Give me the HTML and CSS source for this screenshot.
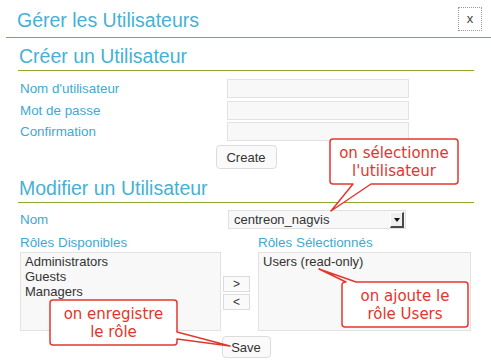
FILE: index.html
```html
<!DOCTYPE html>
<html lang="fr">
<head>
<meta charset="utf-8">
<title>Gérer les Utilisateurs</title>
<link rel="stylesheet" href="styles.css">
</head>
<body>
<div class="dialog">
  <div class="dlg-header">
    <h1 class="dlg-title">Gérer les Utilisateurs</h1>
    <button class="close-btn" type="button">x</button>
  </div>

  <section class="panel panel-create">
    <h2 class="panel-title">Créer un Utilisateur</h2>
    <div class="form-grid">
      <label class="field-label">Nom d'utilisateur</label>
      <input class="text-input" type="text">
      <label class="field-label">Mot de passe</label>
      <input class="text-input" type="password">
      <label class="field-label">Confirmation</label>
      <input class="text-input" type="password">
    </div>
    <div class="btn-row"><button class="btn btn-create" type="button">Create</button></div>
  </section>

  <section class="panel panel-modify">
    <h2 class="panel-title">Modifier un Utilisateur</h2>
    <div class="name-row">
      <label class="field-label">Nom</label>
      <div class="select">
        <span class="select-value">centreon_nagvis</span>
        <span class="select-arrow"><span class="select-tri"></span></span>
      </div>
    </div>
    <div class="roles">
      <div class="field-label roles-label">Rôles Disponibles</div>
      <div></div>
      <div class="field-label roles-label">Rôles Sélectionnés</div>
      <div class="listbox">
        <div>Administrators</div>
        <div>Guests</div>
        <div>Managers</div>
      </div>
      <div class="move-btns">
        <button class="move-btn" type="button">&gt;</button>
        <button class="move-btn" type="button">&lt;</button>
      </div>
      <div class="listbox">
        <div>Users (read-only)</div>
      </div>
    </div>
    <div class="btn-row"><button class="btn btn-save" type="button">Save</button></div>
  </section>

  <svg class="callout-shapes" width="491" height="361" viewBox="0 0 491 361">
    <path d="M333,139 H455 Q458,139 458,142 V181 Q458,184 455,184 H371 L331,211 L353,184 H333 Q330,184 330,181 V142 Q330,139 333,139 Z"/>
    <path d="M346,282 L319,269 L356,282 H465 Q468,282 468,285 V324 Q468,327 465,327 H345 Q342,327 342,324 V285 Q342,282 346,282 Z"/>
    <path d="M53,300 H174 Q177,300 177,303 V332 L230,346 L177,339 V342 Q177,345 174,345 H53 Q50,345 50,342 V303 Q50,300 53,300 Z"/>
  </svg>
  <div class="callout callout-select">on sélectionne<br>l'utilisateur</div>
  <div class="callout callout-add">on ajoute le<br>rôle Users</div>
  <div class="callout callout-save">on enregistre<br>le rôle</div>
</div>
</body>
</html>
```
FILE: styles.css
```css
* { box-sizing: border-box; }

body {
  margin: 0;
  background: #fff;
  font-family: "Liberation Sans", Arial, sans-serif;
}

.dialog {
  position: relative;
  width: 491px;
  height: 361px;
  overflow: hidden;
  background: #fff;
}

.dlg-header {
  display: flex;
  justify-content: space-between;
  align-items: flex-start;
  height: 38px;
  margin-left: 6px;
  padding: 7px 9px 0 11px;
  border-bottom: 1px solid #8aab2e;
}

.dlg-title {
  margin: 1px 0 0;
  font-size: 19.5px;
  font-weight: normal;
  line-height: 24px;
  color: #46b1d6;
}

.close-btn {
  width: 24px;
  height: 24px;
  padding: 0;
  border: 1px dotted #9a9a9a;
  background: #fff;
  font-family: "Liberation Sans", Arial, sans-serif;
  font-size: 13px;
  line-height: 20px;
  color: #444;
}

.panel {
  margin: 0 17px 0 18px;
}

.panel-title {
  margin: 6px 0 0;
  padding: 0 0 2px 1px;
  font-size: 19.5px;
  font-weight: normal;
  line-height: 24px;
  color: #46b1d6;
  border-bottom: 1px solid #8aab2e;
}

.panel-modify .panel-title { margin-top: 7px; }

.field-label {
  font-size: 13.4px;
  line-height: 19px;
  color: #3fa9d0;
}

.form-grid {
  display: grid;
  grid-template-columns: 207px 182px;
  row-gap: 2.5px;
  align-items: center;
  margin-top: 8px;
  padding-left: 2px;
}

.text-input {
  display: block;
  width: 182px;
  height: 19px;
  margin: 0;
  padding: 0;
  border: 1px solid #e2e2e2;
  background: #f8f8f8;
}

.btn-row {
  display: flex;
  justify-content: center;
}

.panel-create .btn-row { margin-top: 4px; }
.panel-modify .btn-row { margin-top: 5px; }

.btn {
  padding: 0;
  border: 1px solid #dcdcdc;
  border-radius: 4px;
  background: #fafafa;
  font-family: "Liberation Sans", Arial, sans-serif;
  font-size: 13px;
  color: #333;
}

.btn-create { width: 61px; height: 24px; }
.btn-save { width: 49px; height: 22px; }

.name-row {
  display: grid;
  grid-template-columns: 208px 178px;
  align-items: center;
  margin-top: 7px;
  padding-left: 2px;
}

.select {
  display: flex;
  justify-content: space-between;
  align-items: center;
  height: 19px;
  padding: 0 1px 0 5px;
  border: 1px solid #e0e0e0;
  background: #f8f8f8;
  font-size: 13px;
  color: #333;
}

.select-arrow {
  display: flex;
  justify-content: center;
  align-items: center;
  width: 14px;
  height: 16px;
  margin-top: 1px;
  border-left: 1px solid #fff;
  border-top: 1px solid #fff;
  border-right: 2px solid #4a4a4a;
  border-bottom: 2px solid #4a4a4a;
  background: #efefef;
}

.select-tri {
  width: 0;
  height: 0;
  border-left: 3.5px solid transparent;
  border-right: 3.5px solid transparent;
  border-top: 4px solid #111;
}

.roles {
  display: grid;
  grid-template-columns: 201px 37px 213px;
  grid-template-rows: 15px 79px;
  row-gap: 2px;
  margin-top: 6px;
  padding-left: 2px;
}

.roles-label { line-height: 15px; }

.listbox {
  padding: 1px 4px;
  border: 1px solid #e2e2e2;
  background: #f8f8f8;
  font-size: 13px;
  line-height: 15px;
  color: #333;
}

.move-btns {
  display: flex;
  flex-direction: column;
  align-items: flex-start;
  gap: 1.5px;
  padding: 24px 0 0 2px;
}

.move-btn {
  width: 27px;
  height: 16px;
  padding: 0;
  border: 1px solid #dcdcdc;
  background: #fafafa;
  font-family: "Liberation Sans", Arial, sans-serif;
  font-size: 12px;
  line-height: 14px;
  color: #333;
}

.callout-shapes {
  position: absolute;
  top: 0;
  left: 0;
  pointer-events: none;
}

.callout-shapes path {
  fill: #fff;
  stroke: #e2372f;
  stroke-width: 1.5;
  stroke-linejoin: round;
}

.callout {
  position: absolute;
  display: flex;
  align-items: center;
  justify-content: center;
  height: 45px;
  text-align: center;
  font-family: "DejaVu Sans", sans-serif;
  font-size: 15px;
  line-height: 18px;
  color: #e3352d;
}

.callout-select { left: 330px; top: 139px; width: 128px; }
.callout-add { left: 342px; top: 282px; width: 126px; }
.callout-save { left: 50px; top: 300px; width: 127px; }
```
